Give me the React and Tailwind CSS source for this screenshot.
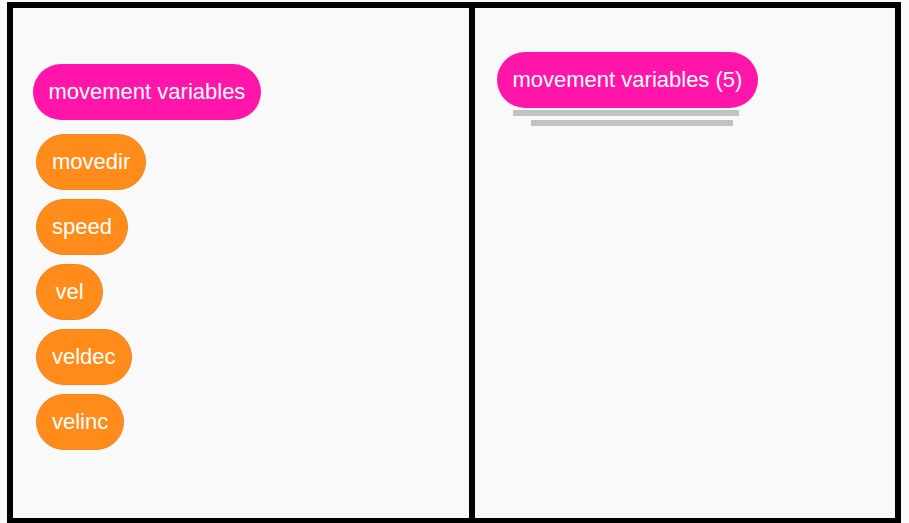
const font = { fontFamily: '"Liberation Sans", Arial, sans-serif' }

const variables = ['movedir', 'speed', 'vel', 'veldec', 'velinc']

function CategoryPill({ label, className = '' }) {
  return (
    <div
      className={`flex h-[56px] items-center justify-center self-start rounded-full bg-[#ff15a9] px-[15.5px] text-[22px] leading-none text-white ${className}`}
    >
      {label}
    </div>
  )
}

function VariablePill({ name }) {
  return (
    <div className="flex h-[56px] min-w-[67px] items-center justify-center self-start rounded-full border border-[#f0871f] bg-[#ff8c1a] px-[15px] text-[22px] leading-none text-white">
      {name}
    </div>
  )
}

export default function App() {
  return (
    <div className="min-h-screen bg-[#f9f9f9] pl-[7px] pt-[2px]" style={font}>
      <div className="flex h-[522px] w-[894px] border-[6px] border-black bg-[#f9f9f9]">
        <div className="flex w-[456px] flex-col pl-[20px] pt-[56px]">
          <CategoryPill label="movement variables" className="h-[55px]" />
          <div className="mt-[14px] flex flex-col gap-[9px] pl-[3px]">
            {variables.map((name) => (
              <VariablePill key={name} name={name} />
            ))}
          </div>
        </div>
        <div className="w-[6px] bg-black" />
        <div className="flex flex-1 flex-col pl-[22px] pt-[44px]">
          <CategoryPill label="movement variables (5)" />
          <div className="ml-[16px] mt-[2px] h-[6px] w-[226px] bg-[#c2c2c2]" />
          <div className="ml-[34px] mt-[4px] h-[6px] w-[202px] bg-[#c2c2c2]" />
        </div>
      </div>
    </div>
  )
}
